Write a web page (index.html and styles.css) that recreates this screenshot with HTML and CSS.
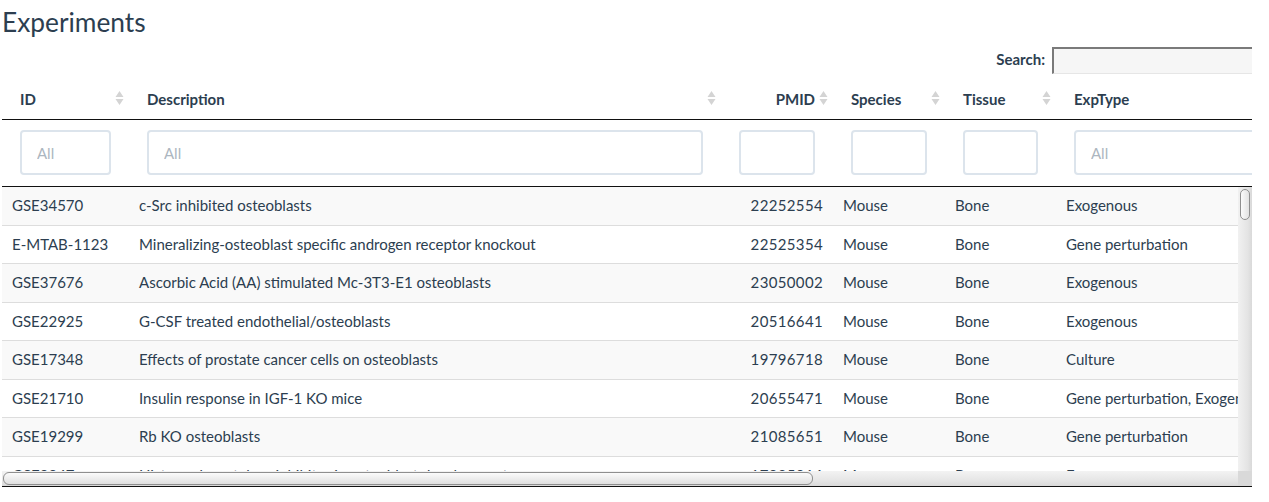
FILE: index.html
```html
<!DOCTYPE html>
<html lang="en">
<head>
<meta charset="utf-8">
<title>Experiments</title>
<link rel="stylesheet" href="styles.css">
</head>
<body>
<div class="page">
  <h2 class="title">Experiments</h2>
  <div class="dt-wrapper">
    <div class="dt-filter">
      <label class="dt-filter-label" for="search">Search:</label>
      <input id="search" class="dt-search" type="search">
    </div>
    <div class="dt-scroll">
      <div class="dt-scroll-head">
        <table class="dt dt-head">
          <colgroup>
            <col class="c-id"><col class="c-desc"><col class="c-pmid"><col class="c-species"><col class="c-tissue"><col class="c-type">
          </colgroup>
          <thead>
            <tr class="head-row">
              <th class="sortable">ID<svg class="sort" viewBox="0 0 9 16" width="9" height="16"><path d="M4.5 1 L8.5 7 L0.5 7 Z M0.5 9 L8.5 9 L4.5 15 Z"/></svg></th>
              <th class="sortable">Description<svg class="sort" viewBox="0 0 9 16" width="9" height="16"><path d="M4.5 1 L8.5 7 L0.5 7 Z M0.5 9 L8.5 9 L4.5 15 Z"/></svg></th>
              <th class="sortable num">PMID<svg class="sort" viewBox="0 0 9 16" width="9" height="16"><path d="M4.5 1 L8.5 7 L0.5 7 Z M0.5 9 L8.5 9 L4.5 15 Z"/></svg></th>
              <th class="sortable">Species<svg class="sort" viewBox="0 0 9 16" width="9" height="16"><path d="M4.5 1 L8.5 7 L0.5 7 Z M0.5 9 L8.5 9 L4.5 15 Z"/></svg></th>
              <th class="sortable">Tissue<svg class="sort" viewBox="0 0 9 16" width="9" height="16"><path d="M4.5 1 L8.5 7 L0.5 7 Z M0.5 9 L8.5 9 L4.5 15 Z"/></svg></th>
              <th class="sortable">ExpType</th>
            </tr>
            <tr class="filter-row">
              <th><input class="col-filter" type="text" placeholder="All"></th>
              <th><input class="col-filter" type="text" placeholder="All"></th>
              <th><input class="col-filter" type="text"></th>
              <th><input class="col-filter" type="text"></th>
              <th><input class="col-filter" type="text"></th>
              <th><input class="col-filter" type="text" placeholder="All"></th>
            </tr>
          </thead>
        </table>
      </div>
      <div class="dt-scroll-body">
        <div class="body-viewport">
          <table class="dt dt-body">
            <colgroup>
              <col class="c-id"><col class="c-desc"><col class="c-pmid"><col class="c-species"><col class="c-tissue"><col class="c-type">
            </colgroup>
            <tbody>
              <tr><td>GSE34570</td><td>c-Src inhibited osteoblasts</td><td class="num">22252554</td><td>Mouse</td><td>Bone</td><td>Exogenous</td></tr>
              <tr><td>E-MTAB-1123</td><td>Mineralizing-osteoblast specific androgen receptor knockout</td><td class="num">22525354</td><td>Mouse</td><td>Bone</td><td>Gene perturbation</td></tr>
              <tr><td>GSE37676</td><td>Ascorbic Acid (AA) stimulated Mc-3T3-E1 osteoblasts</td><td class="num">23050002</td><td>Mouse</td><td>Bone</td><td>Exogenous</td></tr>
              <tr><td>GSE22925</td><td>G-CSF treated endothelial/osteoblasts</td><td class="num">20516641</td><td>Mouse</td><td>Bone</td><td>Exogenous</td></tr>
              <tr><td>GSE17348</td><td>Effects of prostate cancer cells on osteoblasts</td><td class="num">19796718</td><td>Mouse</td><td>Bone</td><td>Culture</td></tr>
              <tr><td>GSE21710</td><td>Insulin response in IGF-1 KO mice</td><td class="num">20655471</td><td>Mouse</td><td>Bone</td><td>Gene perturbation, Exogenous</td></tr>
              <tr><td>GSE19299</td><td>Rb KO osteoblasts</td><td class="num">21085651</td><td>Mouse</td><td>Bone</td><td>Gene perturbation</td></tr>
              <tr><td>GSE9947</td><td>Histone deacetylase inhibitor in osteoblast development</td><td class="num">17925016</td><td>Mouse</td><td>Bone</td><td>Exogenous</td></tr>
            </tbody>
          </table>
        </div>
        <div class="vbar"><div class="vthumb"></div></div>
        <div class="hbar"><div class="hthumb"></div></div>
        <div class="corner"></div>
      </div>
    </div>
  </div>
</div>
</body>
</html>
```

FILE: styles.css
```css
html, body {
  margin: 0;
  padding: 0;
  background: #ffffff;
}

body {
  font-family: Lato, "Open Sans", "Liberation Sans", sans-serif;
  font-size: 15px;
  line-height: 21.5px;
  color: #2c3e50;
}

.page {
  padding-left: 2px;
}

.title {
  margin: 8px 0 0 0;
  font-size: 26.3px;
  font-weight: 400;
  line-height: 28.6px;
  color: #2c3e50;
}

.dt-wrapper {
  width: 1250px;
  overflow: hidden;
}

.dt-filter {
  display: flex;
  justify-content: flex-end;
  align-items: center;
  height: 27px;
  margin-top: 10px;
  margin-bottom: 4px;
}

.dt-filter-label {
  font-weight: 700;
}

.dt-search {
  box-sizing: border-box;
  width: 210px;
  height: 27px;
  margin: 0 -10px 0 7px;
  padding: 0 4px;
  border-style: solid;
  border-width: 2px 1px 1px 2px;
  border-color: #7a7a7a #e6e6e6 #e6e6e6 #7a7a7a;
  background: #f6f6f6;
  font: inherit;
  outline: none;
}

.dt-scroll-head {
  width: 1250px;
  overflow: hidden;
}

.dt {
  width: 1886px;
  table-layout: fixed;
  border-collapse: separate;
  border-spacing: 0;
}

.c-id { width: 127px; }
.c-desc { width: 592px; }
.c-pmid { width: 112px; }
.c-species { width: 112px; }
.c-tissue { width: 111px; }
.c-type { width: 832px; }

.dt-head th {
  position: relative;
  text-align: left;
  font-weight: 700;
  border-bottom: 1px solid #111111;
  white-space: nowrap;
}

.head-row th {
  padding: 11px 18px 9px;
}

.filter-row th {
  padding: 10px 18px 11px;
}

.dt-head th.num {
  text-align: right;
}

.sort {
  position: absolute;
  right: 5px;
  top: 50%;
  transform: translateY(-50%);
  fill: #d4d4d4;
}

.col-filter {
  box-sizing: border-box;
  display: block;
  width: 100%;
  height: 45px;
  padding: 10px 15px;
  border: 2px solid #dce4ec;
  border-radius: 4px;
  background: #ffffff;
  font: inherit;
  font-weight: 400;
  color: #2c3e50;
  outline: none;
}

.col-filter::placeholder {
  color: #acb6c0;
  opacity: 1;
}

.dt-scroll-body {
  display: grid;
  grid-template-columns: 1236px 14px;
  grid-template-rows: 284px 15px;
  border-bottom: 1px solid #111111;
}

.body-viewport {
  overflow: hidden;
}

.dt-body td {
  padding: 8px 10px;
  border-top: 1px solid #dddddd;
  white-space: nowrap;
  overflow: hidden;
}

.dt-body tr:first-child td {
  border-top: none;
}

.dt-body tr:nth-child(odd) td {
  background: #f9f9f9;
}

.dt-body td.num {
  text-align: right;
  letter-spacing: 0.35px;
}

/* drawn scrollbars */
.vbar {
  box-sizing: border-box;
  padding: 2px 2px 0 2px;
  background: linear-gradient(to right, #f1f1f1, #e4e4e4 70%, #d9d9d9);
}

.vthumb {
  box-sizing: border-box;
  width: 10px;
  height: 31px;
  border: 1px solid #8f8f8f;
  border-radius: 5px;
  background: linear-gradient(to right, #fbfbfb, #e2e2e2);
}

.hbar {
  box-sizing: border-box;
  padding: 1px 0 1px 1px;
  background: linear-gradient(to bottom, #f3f3f3, #e6e6e6 60%, #d9d9d9);
}

.hthumb {
  box-sizing: border-box;
  width: 810px;
  height: 13px;
  border: 1px solid #8f8f8f;
  border-radius: 6px;
  background: linear-gradient(to bottom, #fbfbfb, #e0e0e0);
}

.corner {
  background: #d9d9d9;
}
```
